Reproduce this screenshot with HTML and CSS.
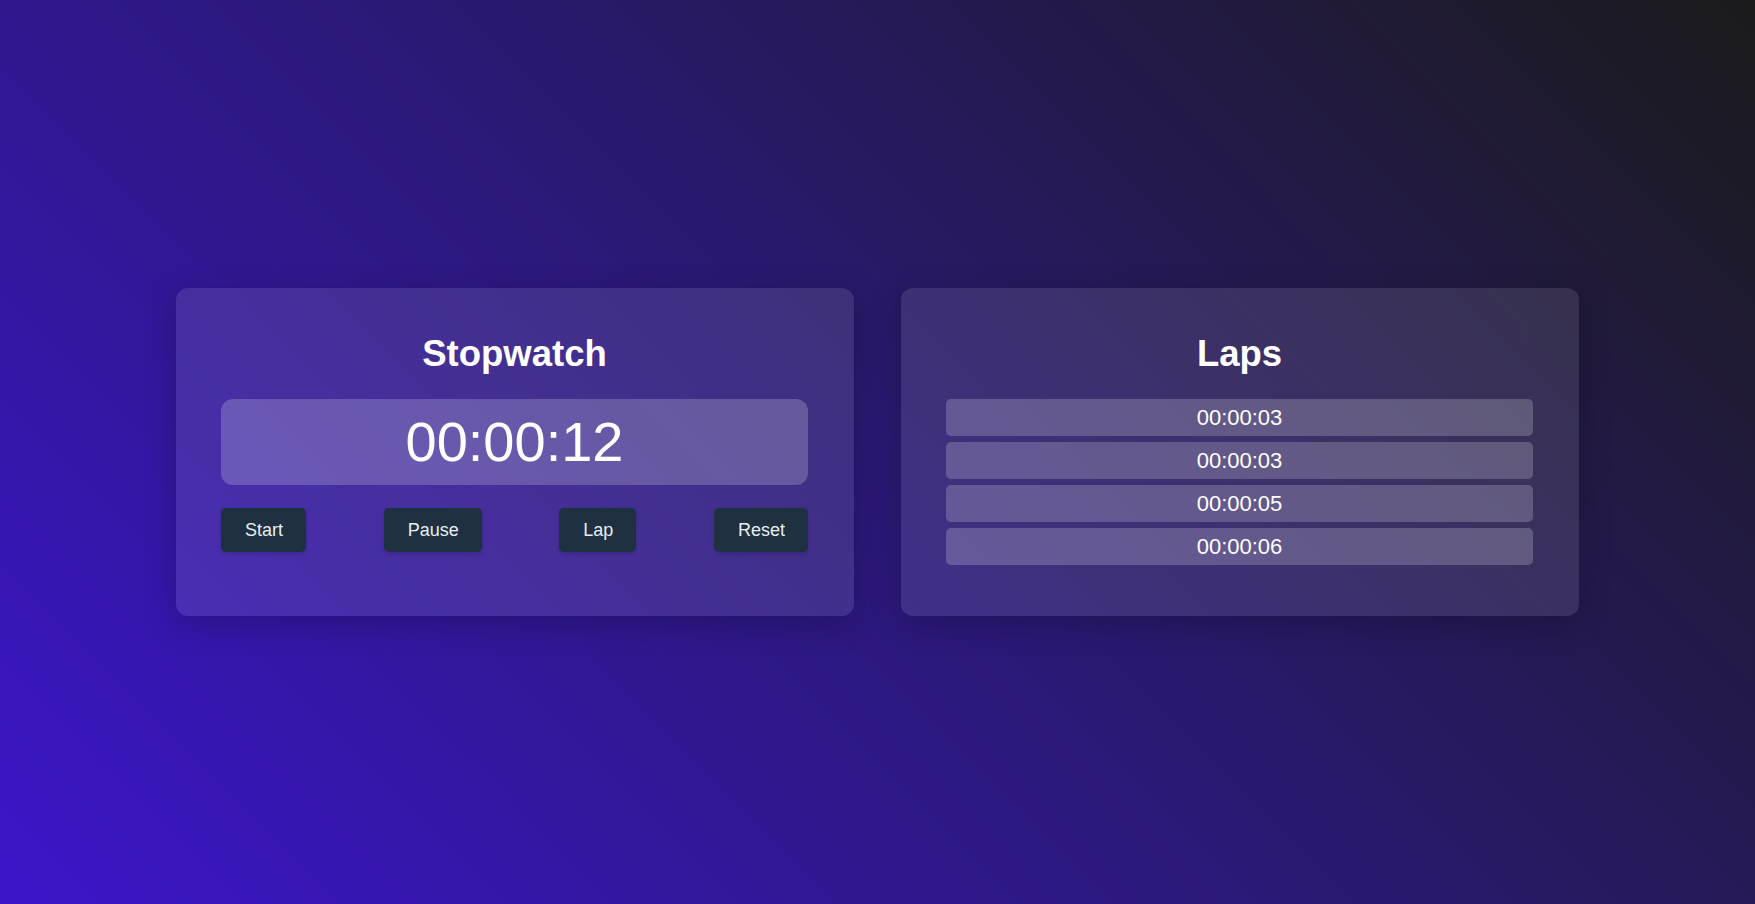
FILE: index.html
```html
<!DOCTYPE html>
<html lang="en">
<head>
<meta charset="utf-8">
<title>Stopwatch</title>
<link rel="stylesheet" href="styles.css">
</head>
<body>
<main class="app">
  <section class="card stopwatch">
    <h2 class="card-title">Stopwatch</h2>
    <div class="display">00:00:12</div>
    <div class="controls">
      <button class="btn">Start</button>
      <button class="btn">Pause</button>
      <button class="btn">Lap</button>
      <button class="btn">Reset</button>
    </div>
  </section>
  <section class="card laps">
    <h2 class="card-title">Laps</h2>
    <ul class="lap-list">
      <li class="lap">00:00:03</li>
      <li class="lap">00:00:03</li>
      <li class="lap">00:00:05</li>
      <li class="lap">00:00:06</li>
    </ul>
  </section>
</main>
</body>
</html>
```

FILE: styles.css
```css
* {
  box-sizing: border-box;
}

html, body {
  margin: 0;
  padding: 0;
  height: 100%;
}

body {
  font-family: "Liberation Sans", Arial, sans-serif;
  color: #ffffff;
  background: linear-gradient(45deg, #3b16ca 0%, #1b1b1b 100%);
  display: flex;
  align-items: center;
  justify-content: center;
  overflow: hidden;
}

.app {
  display: flex;
  gap: 47px;
  align-items: stretch;
}

.card {
  width: 678px;
  padding: 45px 46px 44px 45px;
  background: rgba(255, 255, 255, 0.1);
  border-radius: 12px;
  box-shadow: 0 8px 32px rgba(0, 0, 0, 0.22);
}

.card-title {
  margin: 0 0 24px;
  font-size: 36.5px;
  line-height: 42px;
  font-weight: 700;
  text-align: center;
}

.display {
  height: 86px;
  line-height: 86px;
  font-size: 56px;
  text-align: center;
  background: rgba(255, 255, 255, 0.2);
  border-radius: 12px;
}

.controls {
  display: flex;
  justify-content: space-between;
  margin-top: 23px;
  margin-bottom: 20px;
}

.btn {
  font-family: "Liberation Sans", Arial, sans-serif;
  font-size: 18px;
  line-height: 20px;
  height: 44px;
  padding: 12px 23px 12px 24px;
  border: none;
  border-radius: 5px;
  background: #1f3040;
  color: #e8eef2;
  box-shadow: 0 2px 4px rgba(0, 0, 0, 0.15);
}

.lap-list {
  list-style: none;
  margin: 0;
  padding: 0;
  display: flex;
  flex-direction: column;
  gap: 6px;
}

.lap {
  height: 37px;
  line-height: 37px;
  font-size: 22px;
  text-align: center;
  background: rgba(255, 255, 255, 0.2);
  border-radius: 5px;
}
```
